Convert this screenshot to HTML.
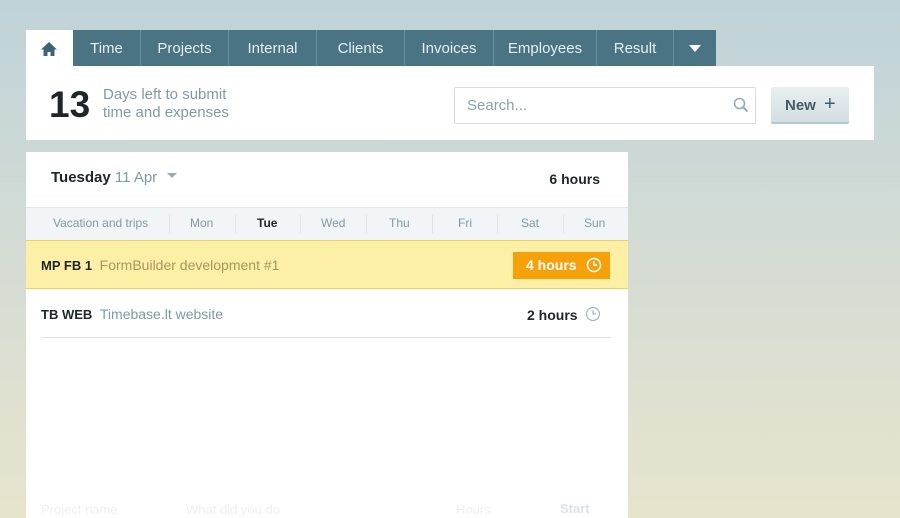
<!DOCTYPE html>
<html><head><style>
*{margin:0;padding:0;box-sizing:border-box}
body{width:900px;height:518px;overflow:hidden;font-family:"Liberation Sans",sans-serif;background:linear-gradient(180deg,#bfd3d9 0%,#d3dbd5 45%,#e7e4cc 100%);position:relative;border-radius:8px}
.tabs{position:absolute;left:26px;top:30px;height:36px;display:flex}
.tab{background:#4a7384;color:#e6eef1;font-size:15px;line-height:38px;text-align:center;border-left:1px solid #6b8e9c}
.home{background:#fff;width:47px;border:none;position:relative}
.hdr{position:absolute;left:26px;top:66px;width:848px;height:74px;background:#fff}
.main{position:absolute;left:26px;top:152px;width:602px;height:366px;background:#fff}
.abs{position:absolute}
</style></head><body>
<div class="tabs">
<div class="tab home"><svg width="18" height="16" viewBox="0 0 18 16" style="position:absolute;left:14px;top:11px"><path d="M9 1L1 8.5h2.5V15h4v-4h3v4h4V8.5H17z" fill="#3f6373"/></svg></div>
<div class="tab" style="width:67px;border-left:none">Time</div>
<div class="tab" style="width:88px">Projects</div>
<div class="tab" style="width:88px">Internal</div>
<div class="tab" style="width:88px">Clients</div>
<div class="tab" style="width:89px">Invoices</div>
<div class="tab" style="width:103px">Employees</div>
<div class="tab" style="width:77px">Result</div>
<div class="tab" style="width:43px"><svg width="12" height="8" viewBox="0 0 12 8" style="margin-top:15px"><path d="M0 0h12L6 7z" fill="#fff"/></svg></div>
</div>
<div class="hdr">
<div class="abs" style="left:23px;top:17px;font-size:37px;font-weight:bold;color:#1e2628;line-height:44px">13</div>
<div class="abs" style="left:77px;top:20px;font-size:15px;color:#7f9aa6;line-height:18px">Days left to submit<br>time and expenses</div>
<div class="abs" style="left:428px;top:21px;width:302px;height:37px;border:1px solid #d3dde1;border-radius:2px;font-size:15px;color:#8aa0aa;line-height:35px;padding-left:12px">Search...
<svg width="16" height="16" viewBox="0 0 16 16" style="position:absolute;right:6px;top:9px"><circle cx="6.5" cy="6.5" r="5" stroke="#9aabb3" stroke-width="1.6" fill="none"/><path d="M10 10l4.5 4.5" stroke="#9aabb3" stroke-width="2"/></svg></div>
<div class="abs" style="left:745px;top:21px;width:78px;height:37px;background:linear-gradient(#e9eff1,#d3dee2);border-bottom:2px solid #b7c6cc;border-radius:2px;font-size:15px;font-weight:bold;color:#425c67;line-height:35px;padding-left:14px">New <span style="font-size:20px;font-weight:normal;margin-left:4px">+</span></div>
</div>
<div class="main">
<div class="abs" style="left:25px;top:17px;font-size:15px;font-weight:bold;color:#1e2628">Tuesday <span style="font-weight:normal;color:#7f9aa6">11 Apr</span> <svg width="10" height="6" viewBox="0 0 10 6" style="margin-left:6px;vertical-align:3px"><path d="M0 0h10L5 5z" fill="#9aabb3"/></svg></div>
<div class="abs" style="right:28px;top:19px;font-size:14px;font-weight:bold;color:#1e2628">6 hours</div>
<div class="abs" style="left:0;top:55px;width:602px;height:33px;background:#f1f5f7;border-top:1px solid #dde6ea;font-size:12px;color:#7f9aa6;line-height:31px">
<span class="abs" style="left:27px">Vacation and trips</span>
<span class="abs" style="left:143px;top:7px;height:18px;border-left:1px solid #dde6ea"></span>
<span class="abs" style="left:164px">Mon</span>
<span class="abs" style="left:209px;top:7px;height:18px;border-left:1px solid #dde6ea"></span>
<span class="abs" style="left:231px;color:#1e2628;font-weight:bold">Tue</span>
<span class="abs" style="left:274px;top:7px;height:18px;border-left:1px solid #dde6ea"></span>
<span class="abs" style="left:295px">Wed</span>
<span class="abs" style="left:340px;top:7px;height:18px;border-left:1px solid #dde6ea"></span>
<span class="abs" style="left:363px">Thu</span>
<span class="abs" style="left:406px;top:7px;height:18px;border-left:1px solid #dde6ea"></span>
<span class="abs" style="left:432px">Fri</span>
<span class="abs" style="left:471px;top:7px;height:18px;border-left:1px solid #dde6ea"></span>
<span class="abs" style="left:495px">Sat</span>
<span class="abs" style="left:537px;top:7px;height:18px;border-left:1px solid #dde6ea"></span>
<span class="abs" style="left:558px">Sun</span>
</div>
<div class="abs" style="left:0;top:88px;width:602px;height:49px;background:#fdf0a6;border-top:1px solid #f0d060;border-bottom:1px solid #f0d060">
<div class="abs" style="left:15px;top:16px;font-size:13px;font-weight:bold;color:#1e2628">MP FB 1 <span style="font-weight:normal;color:#a89560;font-size:14px;margin-left:4px">FormBuilder development #1</span></div>
<div class="abs" style="left:487px;top:11px;width:97px;height:27px;background:#f7a10a;color:#fff;font-size:14px;font-weight:bold;line-height:27px;padding-left:13px">4 hours
<svg width="16" height="16" viewBox="0 0 16 16" style="position:absolute;right:8px;top:5px"><circle cx="8" cy="8" r="6.5" stroke="#fff" stroke-width="1.5" fill="none"/><path d="M8 4v4h3" stroke="#fff" stroke-width="1.5" fill="none"/></svg></div>
</div>
<div class="abs" style="left:15px;top:137px;width:570px;height:49px;border-bottom:1px solid #dde3e6">
<div class="abs" style="left:0;top:17px;font-size:13px;font-weight:bold;color:#1e2628">TB WEB <span style="font-weight:normal;color:#7f9aa6;font-size:14px;margin-left:4px">Timebase.lt website</span></div>
<div class="abs" style="left:486px;top:18px;font-size:14px;font-weight:bold;color:#1e2628">2 hours</div>
<svg width="16" height="16" viewBox="0 0 16 16" style="position:absolute;left:544px;top:17px"><circle cx="8" cy="8" r="6.5" stroke="#a8b6bc" stroke-width="1.2" fill="none"/><path d="M8 4v4h3" stroke="#a8b6bc" stroke-width="1.2" fill="none"/></svg>
</div>
<div class="abs" style="left:15px;top:350px;font-size:13px;color:#eef0f0">Project name</div>
<div class="abs" style="left:160px;top:350px;font-size:13px;color:#eef0f0">What did you do</div>
<div class="abs" style="left:430px;top:350px;font-size:13px;color:#eef0f0">Hours</div>
<div class="abs" style="left:534px;top:349px;font-size:13px;font-weight:bold;color:#dde2e4">Start</div>
</div>
</body></html>
